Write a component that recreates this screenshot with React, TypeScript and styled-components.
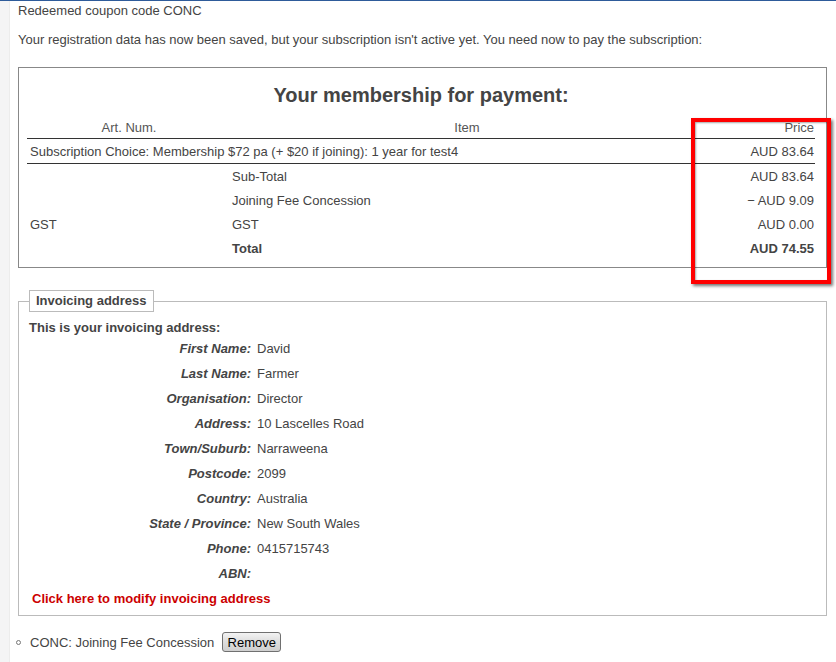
import React from 'react';
import styled, { createGlobalStyle } from 'styled-components';

const GlobalStyle = createGlobalStyle`
  html, body {
    margin: 0;
    padding: 0;
    background: #fff;
  }
  body {
    font-family: "Liberation Sans", Arial, sans-serif;
    font-size: 13px;
    color: #444;
  }
`;

const Page = styled.div`
  display: flex;
  min-height: 662px;
  border-top: 1px solid #2e5b9a;
  box-sizing: border-box;
`;

const Strip = styled.div`
  width: 9px;
  flex: none;
  background: #f4f4f5;
  border-right: 1px solid #ececec;
`;

const Main = styled.div`
  flex: 1;
  padding: 0 9px 0 8px;
`;

const Para = styled.p<{ $top: number }>`
  margin: ${(p) => p.$top}px 0 0;
  line-height: 17px;
`;

const PaymentBox = styled.div`
  position: relative;
  margin-top: 19px;
  border: 1px solid #888;
  padding: 0 11px 7px 8px;
`;

const Title = styled.h2`
  margin: 15px 0 9px;
  font-size: 20px;
  line-height: 24px;
  font-weight: bold;
  text-align: center;
  color: #444;
`;

const Table = styled.table`
  width: 788px;
  table-layout: fixed;
  border-collapse: collapse;
`;

const HeadCell = styled.th<{ $align: string }>`
  font-weight: normal;
  color: #555;
  height: 22px;
  padding: 0 1px 0 3px;
  text-align: ${(p) => p.$align};
  border-bottom: 1px solid #333;
`;

const Cell = styled.td<{ $align?: string; $bold?: boolean; $line?: boolean }>`
  height: 24px;
  padding: 0 1px 0 3px;
  text-align: ${(p) => p.$align || 'left'};
  font-weight: ${(p) => (p.$bold ? 'bold' : 'normal')};
  border-bottom: ${(p) => (p.$line ? '1px solid #333' : 'none')};
  white-space: nowrap;
`;

const Highlight = styled.div`
  position: absolute;
  left: 672px;
  top: 50px;
  width: 132px;
  height: 158px;
  border: 4px solid #f00;
  box-shadow: 2px 2px 3px rgba(0, 0, 0, 0.55), inset 1px 1px 2px rgba(0, 0, 0, 0.35);
  pointer-events: none;
`;

const Fieldset = styled.fieldset`
  margin: 22px 0 0;
  padding: 0 10px 8px;
  border: 1px solid #bbb;
  min-width: 0;
`;

const Legend = styled.legend`
  padding: 0 6px;
  border: 1px solid #bbb;
  font-weight: bold;
  line-height: 20px;
  color: #444;
`;

const Lead = styled.div`
  margin-top: 7px;
  font-weight: bold;
  line-height: 17px;
`;

const AddressGrid = styled.dl`
  display: grid;
  grid-template-columns: 222px 1fr;
  grid-auto-rows: 25px;
  column-gap: 6px;
  align-items: center;
  margin: 0;
`;

const Label = styled.dt`
  text-align: right;
  font-weight: bold;
  font-style: italic;
`;

const Value = styled.dd`
  margin: 0;
`;

const ModifyLink = styled.a`
  display: block;
  margin: 4px 0 0 3px;
  color: #cc0000;
  font-weight: bold;
  line-height: 17px;
  text-decoration: none;
  cursor: pointer;
`;

const CouponList = styled.ul`
  list-style: none;
  margin: 15px 0 0;
  padding: 0;
`;

const CouponItem = styled.li`
  display: flex;
  align-items: center;
  height: 22px;
  margin-left: -2px;
  &::before {
    content: '';
    width: 3px;
    height: 3px;
    border: 1px solid #777;
    border-radius: 50%;
    margin-right: 9px;
  }
`;

const RemoveButton = styled.button`
  margin-left: 8px;
  height: 20px;
  width: 59px;
  padding: 0;
  font-family: "Liberation Sans", Arial, sans-serif;
  font-size: 13px;
  color: #000;
  border: 1px solid #707070;
  border-radius: 3px;
  background: linear-gradient(#f3f3f3, #dddddd 50%, #cfcfcf);
`;

const address: [string, string][] = [
  ['First Name:', 'David'],
  ['Last Name:', 'Farmer'],
  ['Organisation:', 'Director'],
  ['Address:', '10 Lascelles Road'],
  ['Town/Suburb:', 'Narraweena'],
  ['Postcode:', '2099'],
  ['Country:', 'Australia'],
  ['State / Province:', 'New South Wales'],
  ['Phone:', '0415715743'],
  ['ABN:', ''],
];

const totals = [
  { art: '', item: 'Sub-Total', price: 'AUD 83.64' },
  { art: '', item: 'Joining Fee Concession', price: '\u2212 AUD 9.09' },
  { art: 'GST', item: 'GST', price: 'AUD 0.00' },
  { art: '', item: 'Total', price: 'AUD 74.55', bold: true },
];

export default function App() {
  return (
    <>
      <GlobalStyle />
      <Page>
        <Strip />
        <Main>
          <Para $top={1}>Redeemed coupon code CONC</Para>
          <Para $top={12}>
            Your registration data has now been saved, but your subscription isn't active yet. You need now to pay the
            subscription:
          </Para>

          <PaymentBox>
            <Title>Your membership for payment:</Title>
            <Table>
              <colgroup>
                <col style={{ width: 202 }} />
                <col style={{ width: 474 }} />
                <col style={{ width: 112 }} />
              </colgroup>
              <thead>
                <tr>
                  <HeadCell $align="center">Art. Num.</HeadCell>
                  <HeadCell $align="center">Item</HeadCell>
                  <HeadCell $align="right">Price</HeadCell>
                </tr>
              </thead>
              <tbody>
                <tr>
                  <Cell colSpan={2} $line>
                    Subscription Choice: Membership $72 pa (+ $20 if joining): 1 year for test4
                  </Cell>
                  <Cell $align="right" $line>
                    AUD 83.64
                  </Cell>
                </tr>
                {totals.map((t) => (
                  <tr key={t.item}>
                    <Cell>{t.art}</Cell>
                    <Cell $bold={t.bold}>{t.item}</Cell>
                    <Cell $align="right" $bold={t.bold}>
                      {t.price}
                    </Cell>
                  </tr>
                ))}
              </tbody>
            </Table>
            <Highlight />
          </PaymentBox>

          <Fieldset>
            <Legend>Invoicing address</Legend>
            <Lead>This is your invoicing address:</Lead>
            <AddressGrid>
              {address.map(([label, value]) => (
                <React.Fragment key={label}>
                  <Label>{label}</Label>
                  <Value>{value}</Value>
                </React.Fragment>
              ))}
            </AddressGrid>
            <ModifyLink>Click here to modify invoicing address</ModifyLink>
          </Fieldset>

          <CouponList>
            <CouponItem>
              CONC: Joining Fee Concession
              <RemoveButton>Remove</RemoveButton>
            </CouponItem>
          </CouponList>
        </Main>
      </Page>
    </>
  );
}
